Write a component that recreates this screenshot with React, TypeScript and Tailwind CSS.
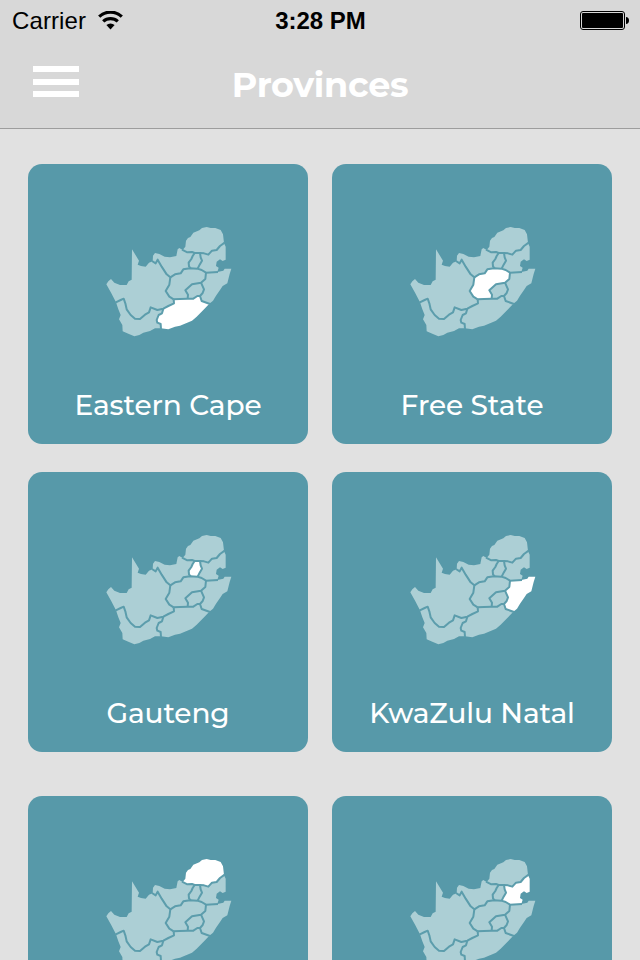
type Province = {
  id: string;
  name?: string;
};

const rows: Province[][] = [
  [
    { id: "ec", name: "Eastern Cape" },
    { id: "fs", name: "Free State" },
  ],
  [
    { id: "gp", name: "Gauteng" },
    { id: "kzn", name: "KwaZulu Natal" },
  ],
  [{ id: "lp" }, { id: "mp" }],
];

const shapes = [
  {
    id: "nc",
    d: "M48 247L34 220L19 193L25 184L33 177L43 188L60 195L80 195L86 184L95 179L96 88L107 106L117 122L113 134L123 138L137 140L147 128L158 124L167 130L173 119L185 140L200 163L211 172L208 194L198 213L208 230L221 238L222 250L205 258L190 266L172 270L152 262L147 277L135 284L120 297L105 296L92 285L80 268L76 250L71 236L62 240Z",
  },
  {
    id: "wc",
    d: "M48 247L62 240L71 236L76 250L80 268L92 285L105 296L120 297L135 284L147 277L152 262L172 270L190 266L186 280L176 285L170 300L172 308L182 312L183 325L165 325L150 333L130 338L118 345L103 349L85 341L68 334L67 315L57 298L62 285L55 268Z",
  },
  {
    id: "nw",
    d: "M158 124L159 107L165 99L178 102L194 110L210 112L229 108L233 88L238 84L248 90L262 97L276 96L284 101L278 108L274 117L266 128L267 139L272 145L250 148L242 160L225 163L211 172L200 163L185 140L173 119L167 130Z",
  },
  {
    id: "lp",
    d: "M248 90L256 80L258 62L264 54L271 51L280 38L298 31L306 24L320 21L332 24L346 24L362 30L369 43L372 69L360 78L350 90L336 92L325 104L312 100L298 101L284 101L276 96L262 97Z",
  },
  {
    id: "mp",
    d: "M372 69L377 80L377 119L368 123L360 118L350 125L348 138L356 143L352 156L318 158L305 150L292 146L299 134L306 122L302 112L300 101L312 100L325 104L336 92L350 90L360 78Z",
  },
  {
    id: "gp",
    d: "M284 99L300 99L302 112L306 122L299 134L292 146L272 146L267 139L266 128L274 117L278 108Z",
  },
  {
    id: "kzn",
    d: "M318 158L352 156L370 152L374 146L394 146L389 162L382 190L368 198L360 210L348 227L339 242L328 251L305 243L300 228L308 219L312 208L303 188L316 177Z",
  },
  {
    id: "fs",
    d: "M211 172L225 163L242 160L250 148L270 144L292 146L305 150L318 158L316 177L303 188L276 193L256 211L264 224L263 236L240 237L221 238L208 230L198 213L208 194Z",
  },
  {
    id: "ls",
    d: "M303 188L276 193L256 211L264 224L263 236L280 236L292 228L300 228L308 219L312 208Z",
  },
  {
    id: "ec",
    d: "M221 238L240 237L263 236L280 236L292 228L300 228L305 243L328 251L310 270L290 290L276 302L258 310L240 317L225 320L205 328L183 325L182 312L172 308L170 300L176 285L186 280L190 266L205 258L222 250Z",
  },
];

const borders = [
  "M46 248L62 240L71 236L76 250L80 268L92 285L105 296L120 297L135 284L147 277L152 262L172 270L190 266L205 258L222 250L221 238",
  "M190 266L186 280L176 285L170 300L172 308L182 312L183 328",
  "M221 238L208 230L197 213L208 194L211 172L200 163L185 140L173 119L167 130L156 123",
  "M211 172L225 163L242 160L250 148L270 145L292 146L305 150L318 158L354 156",
  "M246 89L262 97L276 96L284 99L300 99L312 100L325 104L336 92L350 90L360 78L374 68",
  "M284 99L278 108L274 117L266 128L267 139L272 145",
  "M300 99L302 112L306 122L299 134L293 146",
  "M318 158L316 177L303 188L276 193L256 211L264 224L263 236",
  "M303 188L312 208L308 219L300 228L305 243L330 252",
  "M221 238L240 237L263 236L280 236L292 228L300 228",
];

const ProvinceMap = ({ active }: { active: string }) => {
  return (
    <svg viewBox="-6 0 420 375" className="w-[140px] h-[125px]">
      {shapes.map((shape) => (
        <path
          key={shape.id}
          d={shape.d}
          className={shape.id === active ? "fill-white" : "fill-[#accfd5]"}
        />
      ))}
      <g fill="none" strokeWidth="6" strokeLinejoin="round" className="stroke-[#5c9dac]">
        {borders.map((d) => (
          <path key={d} d={d} />
        ))}
      </g>
    </svg>
  );
};

const ProvinceCard = ({ id, name }: Province) => {
  return (
    <button className="flex flex-col items-center w-[280px] h-[280px] pt-14 rounded-[14px] bg-[#5799a9]">
      <ProvinceMap active={id} />
      {name && (
        <span className="mt-[42px] font-['Montserrat',sans-serif] text-[28px] leading-9 font-medium tracking-[-0.1px] text-white whitespace-nowrap">
          {name}
        </span>
      )}
    </button>
  );
};

const StatusBar = () => {
  return (
    <div className="grid grid-cols-3 items-center h-10 pl-3 pr-[11px] text-black font-['Liberation_Sans',sans-serif] text-2xl leading-[38px]">
      <div className="flex items-center gap-3">
        <span className="tracking-[0.1px] pt-0.5">Carrier</span>
        <svg viewBox="0 0 25 19" className="w-[25px] h-[19px]">
          <g fill="none" stroke="black" strokeWidth="3.2">
            <path d="M1.2 5.6a16.5 16.5 0 0 1 22.6 0" />
            <path d="M5.2 10.4a10.8 10.8 0 0 1 14.6 0" />
          </g>
          <path d="M12.5 18.5L8.4 14a6 6 0 0 1 8.2 0Z" />
        </svg>
      </div>
      <span className="text-center font-bold pt-0.5">3:28 PM</span>
      <svg viewBox="0 0 49 19" className="w-[49px] h-[19px] justify-self-end">
        <rect x="0.5" y="0.5" width="44" height="18" rx="2.5" fill="none" stroke="black" />
        <rect x="2" y="2" width="41" height="15" rx="1" />
        <path d="M46 6c1.8 0 3 1.5 3 3.5S47.8 13 46 13Z" />
      </svg>
    </div>
  );
};

const App = () => {
  return (
    <div className="h-[960px] w-[640px] overflow-hidden bg-[#e1e1e1]">
      <header className="h-[129px] bg-[#d8d8d8] border-b border-[#9d9d9d]">
        <StatusBar />
        <div className="grid grid-cols-[80px_1fr_80px] items-center h-[88px]">
          <button aria-label="Menu" className="flex flex-col gap-[6.5px] ml-[33px] w-[46px] -mt-[5px]">
            <span className="h-[6px] w-full bg-white" />
            <span className="h-[6px] w-full bg-white" />
            <span className="h-[6px] w-full bg-white" />
          </button>
          <h1 className="pt-px text-center font-['Montserrat',sans-serif] text-[35px] leading-[44px] font-bold tracking-[-0.3px] text-white">
            Provinces
          </h1>
        </div>
      </header>

      <main className="flex flex-col px-7 pt-[35px]">
        {rows.map((row, i) => (
          <div key={row[0].id} className={i === 2 ? "flex gap-6 mt-4" : "flex gap-6 mb-7"}>
            {row.map((province) => (
              <ProvinceCard key={province.id} {...province} />
            ))}
          </div>
        ))}
      </main>
    </div>
  );
};

export default App;
